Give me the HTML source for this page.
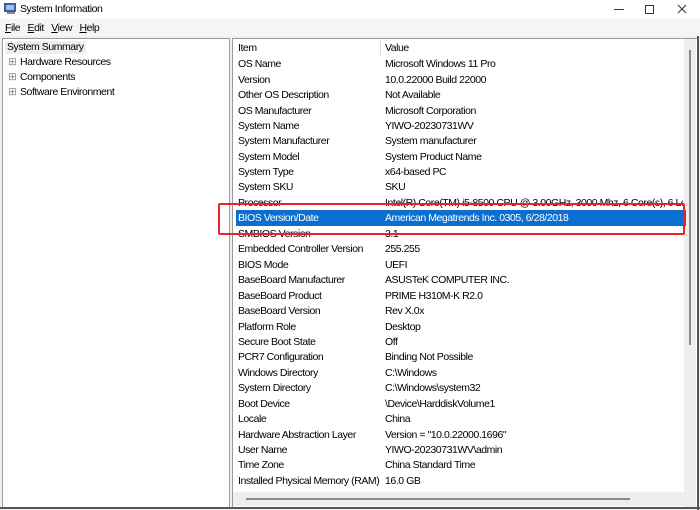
<!DOCTYPE html>
<html><head><style>
body{margin:0;width:700px;height:510px;overflow:hidden;background:#fff;font-family:"Liberation Sans",sans-serif;font-size:10.5px;letter-spacing:-0.45px;color:#000;position:relative}
.a{position:absolute;white-space:nowrap}
.r{position:absolute;left:238px;height:15px;line-height:15px;white-space:nowrap}
.v{position:absolute;left:385px;height:15px;line-height:15px;white-space:nowrap}
</style></head><body>
<div class="a" style="left:0;top:0;width:700px;height:19px;background:#fff"></div>
<svg class="a" style="left:4px;top:3px" width="13" height="12"><rect x="0" y="0" width="12" height="9" fill="#3a5fa8"/><rect x="2" y="2" width="8" height="5" fill="#9cc3ee"/><rect x="3" y="9" width="8" height="2" fill="#888"/></svg>
<div class="a" style="left:20px;top:3px">System Information</div>
<svg class="a" style="left:600px;top:2px" width="90" height="14"><line x1="14" y1="7.5" x2="24" y2="7.5" stroke="#333"/><rect x="45.5" y="3.5" width="8" height="8" fill="none" stroke="#333"/><path d="M78 3L86 11M86 3L78 11" stroke="#333"/></svg>
<div class="a" style="left:0;top:19px;width:700px;height:18px;background:#f5f5f5"></div>
<div class="a" style="left:5px;top:22px"><u>F</u>ile&nbsp;&nbsp;&nbsp;<u>E</u>dit&nbsp;&nbsp;&nbsp;<u>V</u>iew&nbsp;&nbsp;&nbsp;<u>H</u>elp</div>
<div class="a" style="left:0;top:36px;width:700px;height:474px;background:#f0f0f0"></div>
<div class="a" style="left:2px;top:38px;width:226px;height:468px;background:#fff;border:1px solid #999"></div>
<div class="a" style="left:5px;top:41px;background:#eee;padding:0 2px;line-height:13px">System Summary</div>
<div class="a" style="left:8px;top:56px;line-height:13px;color:#888">⊞</div><div class="a" style="left:20px;top:56px;line-height:13px">Hardware Resources</div>
<div class="a" style="left:8px;top:71px;line-height:13px;color:#888">⊞</div><div class="a" style="left:20px;top:71px;line-height:13px">Components</div>
<div class="a" style="left:8px;top:86px;line-height:13px;color:#888">⊞</div><div class="a" style="left:20px;top:86px;line-height:13px">Software Environment</div>
<div class="a" style="left:232px;top:38px;width:464px;height:468px;background:#fff;border:1px solid #999"></div>
<div class="a" style="left:684px;top:39px;width:12px;height:468px;background:#eee"></div>
<div class="a" style="left:689px;top:50px;width:2px;height:295px;background:#888"></div>
<div class="a" style="left:233px;top:492px;width:451px;height:14px;background:#eee"></div>
<div class="a" style="left:246px;top:498px;width:384px;height:2px;background:#888"></div>
<div class="a" style="left:697px;top:36px;width:2px;height:474px;background:#555"></div>
<div class="a" style="left:0;top:507px;width:700px;height:2px;background:#555"></div>
<div class="a" style="left:380px;top:41px;width:1px;height:15px;background:#ddd"></div>
<div class="a" style="left:236px;top:210px;width:450px;height:16px;background:#0a6fd0"></div>
<div class="r" style="top:41px">Item</div><div class="v" style="top:41px">Value</div>
<div class="r" style="top:57px">OS Name</div><div class="v" style="top:57px">Microsoft Windows 11 Pro</div>
<div class="r" style="top:73px">Version</div><div class="v" style="top:73px">10.0.22000 Build 22000</div>
<div class="r" style="top:88px">Other OS Description</div><div class="v" style="top:88px">Not Available</div>
<div class="r" style="top:104px">OS Manufacturer</div><div class="v" style="top:104px">Microsoft Corporation</div>
<div class="r" style="top:119px">System Name</div><div class="v" style="top:119px">YIWO-20230731WV</div>
<div class="r" style="top:134px">System Manufacturer</div><div class="v" style="top:134px">System manufacturer</div>
<div class="r" style="top:150px">System Model</div><div class="v" style="top:150px">System Product Name</div>
<div class="r" style="top:165px">System Type</div><div class="v" style="top:165px">x64-based PC</div>
<div class="r" style="top:180px">System SKU</div><div class="v" style="top:180px">SKU</div>
<div class="r" style="top:196px">Processor</div><div class="v" style="top:196px;width:298px;overflow:hidden">Intel(R) Core(TM) i5-8500 CPU @ 3.00GHz, 3000 Mhz, 6 Core(s), 6 Logical</div>
<div class="r" style="top:211px;color:#fff">BIOS Version/Date</div><div class="v" style="top:211px;color:#fff">American Megatrends Inc. 0305, 6/28/2018</div>
<div class="r" style="top:227px">SMBIOS Version</div><div class="v" style="top:227px">3.1</div>
<div class="r" style="top:242px">Embedded Controller Version</div><div class="v" style="top:242px">255.255</div>
<div class="r" style="top:258px">BIOS Mode</div><div class="v" style="top:258px">UEFI</div>
<div class="r" style="top:273px">BaseBoard Manufacturer</div><div class="v" style="top:273px">ASUSTeK COMPUTER INC.</div>
<div class="r" style="top:289px">BaseBoard Product</div><div class="v" style="top:289px">PRIME H310M-K R2.0</div>
<div class="r" style="top:304px">BaseBoard Version</div><div class="v" style="top:304px">Rev X.0x</div>
<div class="r" style="top:320px">Platform Role</div><div class="v" style="top:320px">Desktop</div>
<div class="r" style="top:335px">Secure Boot State</div><div class="v" style="top:335px">Off</div>
<div class="r" style="top:350px">PCR7 Configuration</div><div class="v" style="top:350px">Binding Not Possible</div>
<div class="r" style="top:366px">Windows Directory</div><div class="v" style="top:366px">C:\Windows</div>
<div class="r" style="top:381px">System Directory</div><div class="v" style="top:381px">C:\Windows\system32</div>
<div class="r" style="top:397px">Boot Device</div><div class="v" style="top:397px">\Device\HarddiskVolume1</div>
<div class="r" style="top:412px">Locale</div><div class="v" style="top:412px">China</div>
<div class="r" style="top:428px">Hardware Abstraction Layer</div><div class="v" style="top:428px">Version = "10.0.22000.1696"</div>
<div class="r" style="top:443px">User Name</div><div class="v" style="top:443px">YIWO-20230731WV\admin</div>
<div class="r" style="top:458px">Time Zone</div><div class="v" style="top:458px">China Standard Time</div>
<div class="r" style="top:474px">Installed Physical Memory (RAM)</div><div class="v" style="top:474px">16.0 GB</div>
<div class="a" style="left:218px;top:203px;width:463px;height:28px;border:2px solid #e8232a;border-radius:2px"></div>
</body></html>
